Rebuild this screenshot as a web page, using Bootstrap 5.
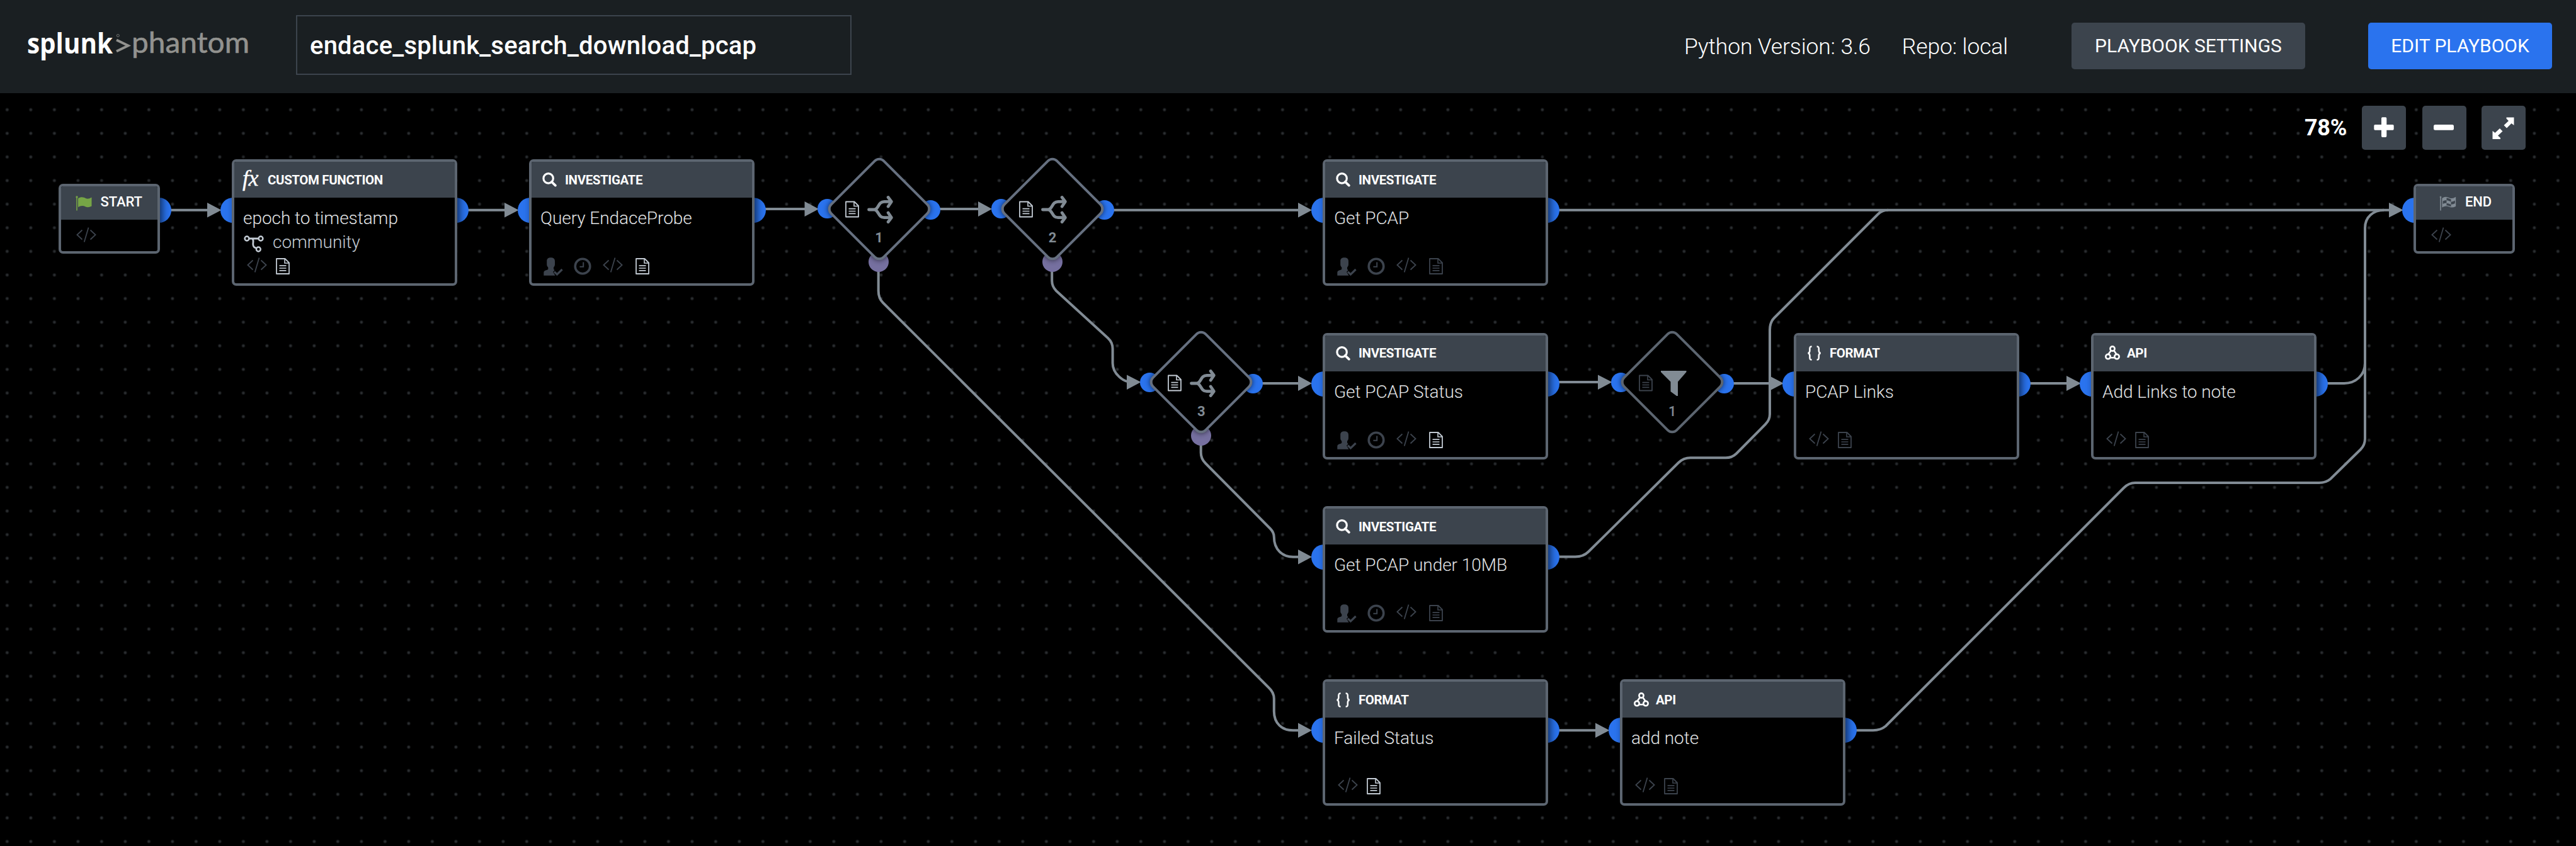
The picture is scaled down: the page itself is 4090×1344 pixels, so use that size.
<!DOCTYPE html>
<html lang="en">
<head>
<meta charset="utf-8">
<title>endace_splunk_search_download_pcap</title>
<link href="https://cdn.jsdelivr.net/npm/bootstrap@5.3.0/dist/css/bootstrap.min.css" rel="stylesheet">
<style>
html,body{height:100%}
body{background:#000;color:#fff;font-family:Roboto,"Liberation Sans",sans-serif;overflow:hidden}
.topbar{height:148px;background:#1a1f22;padding:0 38px 0 40px}
.brand-logo{width:360px;height:80px;margin-right:70px;overflow:visible}
.pb-name{width:882px;height:95px;border:2px solid #3c444d;font-size:40px;font-weight:500;line-height:50px;padding:3px 20px 0;margin-bottom:6px;letter-spacing:.2px}
.meta-text{font-size:35.5px;line-height:44px;font-weight:300;letter-spacing:-.15px}
.meta-a{margin-right:50px}
.meta-b{margin-right:101px}
.btn-pb{height:74px;border-radius:5px;border:0;font-size:30px;font-weight:400;color:#fff;padding:0;line-height:72px;margin-bottom:2px}
.btn-set{width:371px;background:#3c444d;margin-right:100px}
.btn-edit{width:292px;background:#2a73ee}
.flow-canvas{height:1196px;background-image:radial-gradient(circle at center,#34373a 0,#26292c 1.4px,rgba(20,22,24,0) 3.4px);background-size:37.5px 37.5px;background-position:-7.4px 7.6px}
.zoom-ctl{right:80px;top:20px}
.zoom-pct{font-size:36px;font-weight:700;line-height:44px;margin-right:24px;letter-spacing:-.3px}
.zoom-btn{width:70px;height:70px;border-radius:5px;background:#3c444d;padding:0;border:0}
.wires{left:0;top:-148px;width:4090px;height:1344px}
.wires path{fill:none;stroke:#818b94;stroke-width:4}
.wires .arrows{fill:#818b94;stroke:none}
.node{width:358px;height:201px;z-index:0}
.node-sm{width:161px;height:111px}
.frame{width:100%;height:100%;border:4px solid #5c6570;border-radius:7px;background:#000;overflow:hidden}
.shade{border-radius:7px;box-shadow:4px 0 12px rgba(0,0,0,.6);inset:0;z-index:-1}
.node-head{height:57px;background:#3c444d;font-size:20.5px;font-weight:700;line-height:24px;letter-spacing:-.4px;flex:none}
.slot{width:53px;padding-left:17px;flex:none}
.slot-fx{padding-left:13px;font:italic 400 36px/30px "Liberation Serif",serif;margin-top:-6px;-webkit-text-stroke:.4px #fff}
.node-body{padding:14px 13px 12px 14px;font-size:28px;font-weight:300;line-height:38px;letter-spacing:-.05px;color:#e1e3e5;flex:1}
.owner{color:#c3cbd4}
.owner svg{margin:5px 14px 0 1px}
.acts{height:29px;padding-left:6px;color:#3c434d}
.acts .lit{color:#c3cbd4}
.port{width:40px;height:40px;border-radius:50%;background:#2a73ee;z-index:-2;top:61px}
.port-l{left:-18px}
.port-r{right:-18px}
.node-sm .port{top:22px}
.node-sm .node-head{height:53px;font-size:22px;font-weight:500;letter-spacing:-.1px}
.node-sm .node-head span{margin:-4px 0 0 14px}
.head-start{padding-left:23px}
.head-end{padding-left:37px}
.code-sm{margin:12px 0 0 24px;color:#3c434d}
.i-note{margin:1px 0 0 14px}
.acts-inv .i-note{margin-left:20px}
.dec{width:163px;height:163px;z-index:0}
.dec .rhomb{width:122px;height:122px;left:20.5px;top:20.5px;border:4px solid #667080;border-radius:12px;transform:rotate(45deg);background:#000;box-shadow:0 0 9px rgba(0,0,0,.65);z-index:-1}
.dec .port{width:31px;height:31px;top:66px}
.dec .port-l{left:-16px}
.dec .port-r{right:-16px;top:68px}
.dec .port-b{width:32px;height:32px;left:65px;top:150px;background:#7670a0}
.dec-icons{padding:61px 0 0 28px;height:110px;color:#818b94}
.dec-icons .lit{color:#c3cbd4}
.dec-icons .dimmed{color:#3c434d}
.dec-doc{margin-top:8px}
.dec-num{font-size:22px;font-weight:700;line-height:26px;color:#818b94;margin-top:5px}
svg{display:block;flex:none}
#n-start{left:92.5px;top:144px}#n-end{left:3832px;top:144px}
#n-custom{left:368px;top:105px}#n-query{left:840px;top:105px}#n-pcap{left:2100px;top:105px}
#n-status{left:2100px;top:380.5px}#n-10mb{left:2100px;top:656px}#n-failed{left:2100px;top:931px}
#n-links{left:2848px;top:380.5px}#n-addlinks{left:3320px;top:380.5px}#n-addnote{left:2572px;top:931px}
#d-1{left:1314px;top:102px}#d-2{left:1589.5px;top:102px}#d-3{left:1825.7px;top:377.5px}#d-f{left:2573.7px;top:377.5px}
#d-f .rhomb{border-color:#5c6570}
#d-f .dec-num{font-weight:500}
</style>
<script src="https://cdn.jsdelivr.net/npm/bootstrap@5.3.0/dist/js/bootstrap.bundle.min.js"></script>
</head>
<body>
<svg width="0" height="0" class="position-absolute" aria-hidden="true">
 <symbol id="i-doc" viewBox="0 0 22 26"><path d="M1 1H14.5L21 7.5V25H1Z" fill="none" stroke="currentColor" stroke-width="1.8" stroke-linejoin="round"/><path d="M14 1V8H21" fill="none" stroke="currentColor" stroke-width="1.6"/><path d="M5.5 12.2H16.5M5.5 16H16.5M5.5 19.8H16.5" stroke="currentColor" stroke-width="1.7"/></symbol>
 <symbol id="i-code" viewBox="0 0 32 24"><path d="M9.5 4.5L1.4 12L9.5 19.5M22.5 4.5L30.6 12L22.5 19.5M19.5 .5L12.7 23.5" fill="none" stroke="currentColor" stroke-width="1.8"/></symbol>
 <symbol id="i-clock" viewBox="0 0 28 28"><circle cx="14" cy="14" r="11.8" fill="none" stroke="currentColor" stroke-width="3.6"/><path d="M15.2 7.5V14.8H9.4" fill="none" stroke="currentColor" stroke-width="2"/></symbol>
 <symbol id="i-user" viewBox="0 0 31 29"><path d="M11.5 .3C15.5 .3 18 2 18 6V11C18 13 17 14.5 16 15.8V18.5L17.5 20.3L15 23L18.5 28.7H.3V24C.3 20.5 4.5 20.8 7.3 18.8V15.8C6 14.5 5.2 13 5.2 11V6C5.2 2 7.5 .3 11.5 .3Z" fill="currentColor"/><path d="M17 22.7L21.4 27L29.6 19" fill="none" stroke="currentColor" stroke-width="3.2"/></symbol>
 <symbol id="i-search" viewBox="0 0 23 23"><circle cx="9.6" cy="9.4" r="7.7" fill="none" stroke="currentColor" stroke-width="3.2"/><path d="M14.8 14.8L20.8 20.6" stroke="currentColor" stroke-width="3.8" stroke-linecap="round"/></symbol>
 <symbol id="i-api" viewBox="0 0 24 24"><g fill="none" stroke="currentColor" stroke-width="2.6"><circle cx="12" cy="5" r="3.6"/><circle cx="5" cy="17.6" r="3.7"/><circle cx="19" cy="17.6" r="3.7"/><path d="M9.6 8L5.6 13.8M14.4 8L18.4 13.8M8.5 19.2H15.5"/></g></symbol>
 <symbol id="i-brace" viewBox="0 0 24 24"><path d="M7.6 1.4C4.6 1.4 4.4 2.8 4.4 5V8C4.4 10.4 3.6 11.6 1.6 12C3.6 12.4 4.4 13.6 4.4 16V19C4.4 21.2 4.6 22.6 7.6 22.6M15.6 1.4C18.6 1.4 18.8 2.8 18.8 5V8C18.8 10.4 19.6 11.6 21.6 12C19.6 12.4 18.8 13.6 18.8 16V19C18.8 21.2 18.6 22.6 15.6 22.6" fill="none" stroke="currentColor" stroke-width="2.5"/></symbol>
 <symbol id="i-fork" viewBox="0 0 41 44"><g fill="none" stroke="currentColor" stroke-width="4.8" stroke-linecap="round" stroke-linejoin="round"><path d="M2.5 22H11C18 22 17 9.3 27 9.3H37M11 22C18 22 17 34.7 27 34.7H37"/><path d="M33.2 2.5L38.3 9.3L33.2 17M33.2 27L38.3 34.7L33.2 41.5"/></g></symbol>
 <symbol id="i-repo" viewBox="0 0 32 27"><g fill="none" stroke="currentColor" stroke-width="2.5"><circle cx="5" cy="5" r="3.4"/><circle cx="27" cy="5" r="3.4"/><circle cx="23.3" cy="22" r="3.4"/><path d="M8.5 5H23.5M13.5 5C16.5 7.5 14.5 10 14.8 14.5C15 18 16.5 18.8 20 20.2" stroke-width="2.8"/></g></symbol>
</svg>

<header class="topbar d-flex align-items-center">
 <svg class="brand-logo" viewBox="40 34 360 80">
  <text x="43" y="84.5" textLength="136" lengthAdjust="spacingAndGlyphs" font-family="Open Sans" font-weight="700" font-size="45" fill="#fff">splunk</text>
  <path d="M185 63.5L203.5 72.5L185 81.5" fill="none" stroke="#92928f" stroke-width="4"/>
  <circle cx="187.3" cy="56.5" r="2" fill="none" stroke="#777976" stroke-width="1"/>
  <text x="209" y="84" textLength="187" lengthAdjust="spacingAndGlyphs" font-family="Lato" font-size="46" fill="#92928f" stroke="#92928f" stroke-width=".6">phantom</text>
 </svg>
 <div class="pb-name d-flex align-items-center">endace_splunk_search_download_pcap</div>
 <div class="meta-text meta-a ms-auto">Python Version: 3.6</div>
 <div class="meta-text meta-b">Repo: local</div>
 <button class="btn btn-pb btn-set">PLAYBOOK SETTINGS</button>
 <button class="btn btn-pb btn-edit">EDIT PLAYBOOK</button>
</header>

<main class="flow-canvas position-relative">
 <svg class="wires position-absolute" viewBox="0 0 4090 1344">
  <path d="M271 333.7H335M743 333.7H805M1214 332H1280M1492 332H1556M1766 333.7H2065M2473 333.7H3800"/>
  <path d="M1394.7 430V462Q1394.7 474 1402 481L2014 1092Q2022.8 1100 2022.8 1110V1130C2022.8 1150 2036 1160.2 2053 1160.2H2065"/>
  <path d="M1670.2 430V446Q1670.2 455 1677 462L1759 537Q1766.6 544 1766.6 554V577C1766.6 594 1784 607 1796 607"/>
  <path d="M1906.7 705V719Q1906.7 729 1914 736L2017 840Q2022.8 846 2022.8 853C2022.8 873 2036 884.7 2053 884.7H2065"/>
  <path d="M2000 609H2065M2473 607H2540M2750 609H2815M3222 609H3288M2473 1160.2H2540"/>
  <path d="M2473 884.5H2501Q2514 884.5 2522 876.5L2665 735Q2673 727.3 2684 727.3H2740Q2750 727.3 2757 720.5L2803 674Q2810 667 2810 658V524Q2810 512 2817 505L2982 340Q2988 333.7 2998 333.7"/>
  <path d="M3694 609H3722C3740 609 3755 596 3755 577"/>
  <path d="M2946 1160.2H2974Q2986 1160.2 2994 1153.5L3372 775Q3380 767 3390 767H3682Q3693 767 3700 761L3748 714Q3755 707 3755 697V362C3755 345 3768 333.7 3785 333.7"/>
  <path class="arrows" d="M329 322L351.5 333.7L329 345.5ZM801 322L823.5 333.7L801 345.5ZM1277.5 320L1300 332L1277.5 344ZM1553 320L1575 332L1553 344ZM2061 322L2083 333.7L2061 345.5ZM3793 322L3816 333.7L3793 345.5ZM1789 595.5L1811.5 607L1789 619ZM2061 597L2083 609L2061 621ZM2061 873L2083 884.7L2061 896.5ZM2061 1148.5L2083 1160.2L2061 1172ZM2537 595.5L2559.5 607L2537 619ZM2809 597L2832 609L2809 621ZM3281 597L3304 609L3281 621ZM2533 1148.5L2555.5 1160.2L2533 1172Z"/>
 </svg>

 <section class="node node-sm position-absolute" id="n-start">
  <i class="port port-r position-absolute"></i><i class="shade position-absolute"></i>
  <div class="frame d-flex flex-column">
   <div class="node-head head-start d-flex align-items-center">
    <svg width="26" height="24" viewBox="0 0 26 24"><path d="M2 1.5V23.5" stroke="#76a546" stroke-width="1.6"/><circle cx="2" cy="2" r="1.7" fill="#76a546"/><path d="M4 4.2C9 1 13 2.500 16 4Q20 6 25.5 2.5V16.5Q20 19.5 16 17.5Q10 14.5 4 18Z" fill="#76a546"/></svg>
    <span>START</span>
   </div>
   <svg class="code-sm" width="32" height="24"><use href="#i-code"/></svg>
  </div>
 </section>

 <section class="node position-absolute" id="n-custom">
  <i class="port port-l position-absolute"></i><i class="port port-r position-absolute"></i><i class="shade position-absolute"></i>
  <div class="frame d-flex flex-column">
   <div class="node-head d-flex align-items-center"><span class="slot slot-fx">fx</span><span>CUSTOM FUNCTION</span></div>
   <div class="node-body d-flex flex-column"><span>epoch to timestamp</span>
    <span class="owner d-flex align-items-center"><svg width="32" height="27"><use href="#i-repo"/></svg>community</span>
    <div class="acts d-flex mt-auto"><svg width="32" height="24"><use href="#i-code"/></svg><svg class="i-note lit" width="22" height="26"><use href="#i-doc"/></svg></div></div>
  </div>
 </section>
</main>
<template id="tpl-inv"><svg width="31" height="29" style="margin-left:-1px"><use href="#i-user"/></svg><svg width="28" height="28" style="margin-left:17px"><use href="#i-clock"/></svg><svg width="32" height="24" style="margin-left:18px"><use href="#i-code"/></svg><svg class="i-note" width="22" height="26"><use href="#i-doc"/></svg></template>
<template id="tpl-std"><svg width="32" height="24"><use href="#i-code"/></svg><svg class="i-note" width="22" height="26"><use href="#i-doc"/></svg></template>
<script>
const canvas = document.querySelector('.flow-canvas');
const kinds = {
  inv: ['INVESTIGATE', '<svg width="23" height="23"><use href="#i-search"/></svg>', 'tpl-inv'],
  fmt: ['FORMAT', '<svg width="24" height="24"><use href="#i-brace"/></svg>', 'tpl-std'],
  api: ['API', '<svg width="24" height="24" style="margin-left:1px"><use href="#i-api"/></svg>', 'tpl-std']
};
// id, kind, label, has notes
[['n-query','inv','Query EndaceProbe',1],['n-pcap','inv','Get PCAP',0],['n-status','inv','Get PCAP Status',1],
 ['n-10mb','inv','Get PCAP under 10MB',0],['n-links','fmt','PCAP Links',0],['n-addlinks','api','Add Links to note',0],
 ['n-failed','fmt','Failed Status',1],['n-addnote','api','add note',0]].forEach(([id, kind, label, note]) => {
  const [title, icon, tpl] = kinds[kind];
  canvas.insertAdjacentHTML('beforeend', `<section class="node position-absolute" id="${id}">
   <i class="port port-l position-absolute"></i><i class="port port-r position-absolute"></i><i class="shade position-absolute"></i>
   <div class="frame d-flex flex-column">
    <div class="node-head d-flex align-items-center"><span class="slot">${icon}</span><span>${title}</span></div>
    <div class="node-body d-flex flex-column"><span>${label}</span><div class="acts acts-${kind} d-flex mt-auto">${document.getElementById(tpl).innerHTML}</div></div>
   </div></section>`);
  if (note) document.querySelector('#' + id + ' .i-note').classList.add('lit');
});
const fork = '<svg width="41" height="44" style="margin-left:13px"><use href="#i-fork"/></svg>';
const funnel = '<svg width="41" height="42" viewBox="0 0 41 42" style="margin:1px 0 0 13px"><path d="M0 1H40.5V3L27 18.5V41H25L15.5 34V18.5L0 3Z" fill="currentColor"/></svg>';
// id, number, icon, has else branch
[['d-1','1',fork,1],['d-2','2',fork,1],['d-3','3',fork,1],['d-f','1',funnel,0]].forEach(([id, n, icon, branch]) => {
  canvas.insertAdjacentHTML('beforeend', `<section class="dec position-absolute" id="${id}">
   <i class="port port-l position-absolute"></i><i class="port port-r position-absolute"></i>${branch ? '<i class="port port-b position-absolute"></i>' : ''}
   <i class="rhomb position-absolute"></i>
   <div class="dec-icons d-flex"><svg class="dec-doc ${branch ? 'lit' : 'dimmed'}" width="22" height="27"><use href="#i-doc"/></svg>${icon}</div>
   <div class="dec-num text-center">${n}</div></section>`);
});
canvas.insertAdjacentHTML('beforeend', `<section class="node node-sm position-absolute" id="n-end">
  <i class="port port-l position-absolute"></i>
  <div class="frame d-flex flex-column"><div class="node-head head-end d-flex align-items-center">
  <svg width="27" height="24" viewBox="0 0 27 24"><g stroke="#818b94" fill="none"><path d="M2 1.5V23.5" stroke-width="1.6"/><circle cx="2" cy="2" r="1"/><path d="M5 4.2C9 1.5 13 2.5 16 4Q20 6 25.5 2.8V16.3Q20 19 16 17Q10 14.5 5 17.5Z" stroke-width="1.3"/></g><path d="M5 4.2Q8 2 11.5 2.4V7Q8 7 5 8.8ZM18.5 5Q22 5 25.5 2.8V7.3Q22 9.5 18.5 9.7ZM11.5 7Q15 7.5 18.5 9.5V14Q15 12 11.5 11.7ZM5 13.2Q8 11.5 11.5 11.6V15.6Q8 15.7 5 17.5ZM18.5 13.8Q22 14 25.5 11.7V16.3Q22 18.2 18.5 17.8Z" fill="#818b94"/></svg>
  <span>END</span></div>
  <svg class="code-sm" width="32" height="24"><use href="#i-code"/></svg></div></section>
 <div class="zoom-ctl position-absolute d-flex align-items-center"><span class="zoom-pct">78%</span>
  <button class="btn zoom-btn" style="margin-right:26px"><svg width="70" height="70"><path d="M31 20Q31 18.3 32.700 18.3H37.600Q39.300 18.3 39.300 20V30H49Q50.700 30 50.700 31.700V37Q50.700 38.700 49 38.700H39.300V48.300Q39.300 50 37.600 50H32.700Q31 50 31 48.300V38.700H21Q19.300 38.700 19.300 37V31.700Q19.300 30 21 30H31Z" fill="#fff"/></svg></button>
  <button class="btn zoom-btn" style="margin-right:24px"><svg width="70" height="70"><rect x="18" y="30" width="32" height="8.7" rx="2.5" fill="#fff"/></svg></button>
  <button class="btn zoom-btn"><svg width="70" height="70"><path d="M51.5 18.5V31L47.5 28L40 35.5L35.5 31L43 24L39.500 20.5V18.5ZM17.5 53V40L21.5 43L29 36L33.5 40.5L26 47.5L30 51V53Z" fill="#fff"/></svg></button></div>`);
</script>
</body>
</html>
